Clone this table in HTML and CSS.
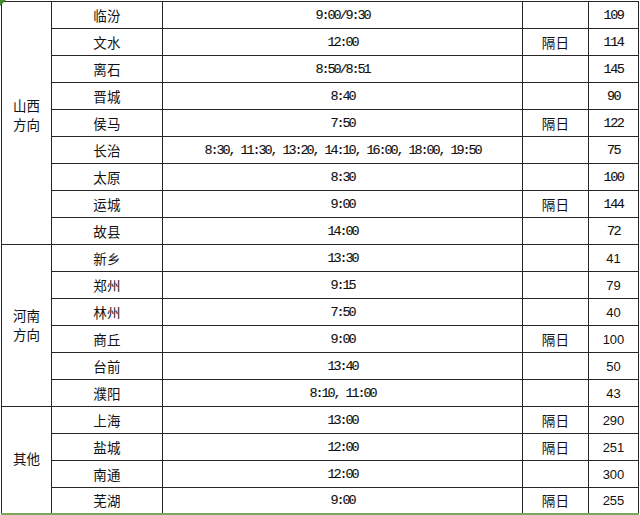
FILE: index.html
```html
<!DOCTYPE html>
<html lang="zh-CN">
<head>
<meta charset="utf-8">
<link rel="stylesheet" href="styles.css">
</head>
<body>
<div class="sheet">
  <div class="grid">
    <div class="c grp g1">山西<br>方向</div>
    <div class="c city">临汾</div><div class="c time">9:00/9:30</div><div class="c note"></div><div class="c num">109</div>
    <div class="c city">文水</div><div class="c time">12:00</div><div class="c note">隔日</div><div class="c num">114</div>
    <div class="c city">离石</div><div class="c time">8:50/8:51</div><div class="c note"></div><div class="c num">145</div>
    <div class="c city">晋城</div><div class="c time">8:40</div><div class="c note"></div><div class="c num">90</div>
    <div class="c city">侯马</div><div class="c time">7:50</div><div class="c note">隔日</div><div class="c num">122</div>
    <div class="c city">长治</div><div class="c time">8:30, 11:30, 13:20, 14:10, 16:00, 18:00, 19:50</div><div class="c note"></div><div class="c num">75</div>
    <div class="c city">太原</div><div class="c time">8:30</div><div class="c note"></div><div class="c num">100</div>
    <div class="c city">运城</div><div class="c time">9:00</div><div class="c note">隔日</div><div class="c num">144</div>
    <div class="c city">故县</div><div class="c time">14:00</div><div class="c note"></div><div class="c num">72</div>

    <div class="c grp g2">河南<br>方向</div>
    <div class="c city">新乡</div><div class="c time">13:30</div><div class="c note"></div><div class="c num sans">41</div>
    <div class="c city">郑州</div><div class="c time">9:15</div><div class="c note"></div><div class="c num sans">79</div>
    <div class="c city">林州</div><div class="c time">7:50</div><div class="c note"></div><div class="c num sans">40</div>
    <div class="c city">商丘</div><div class="c time">9:00</div><div class="c note">隔日</div><div class="c num sans">100</div>
    <div class="c city">台前</div><div class="c time">13:40</div><div class="c note"></div><div class="c num sans">50</div>
    <div class="c city">濮阳</div><div class="c time">8:10, 11:00</div><div class="c note"></div><div class="c num sans">43</div>

    <div class="c grp g3">其他</div>
    <div class="c city">上海</div><div class="c time">13:00</div><div class="c note">隔日</div><div class="c num sans">290</div>
    <div class="c city">盐城</div><div class="c time">12:00</div><div class="c note">隔日</div><div class="c num sans">251</div>
    <div class="c city">南通</div><div class="c time">12:00</div><div class="c note"></div><div class="c num sans">300</div>
    <div class="c city">芜湖</div><div class="c time">9:00</div><div class="c note">隔日</div><div class="c num sans">255</div>
  </div>
  <div class="corner"></div>
</div>
</body>
</html>
```
FILE: styles.css
```css
html, body {
  margin: 0;
  padding: 0;
  background: #ffffff;
}
body {
  width: 640px;
  height: 515px;
  overflow: hidden;
  font-family: "Noto Sans CJK SC", "Noto Sans", sans-serif;
  color: #111111;
}
.sheet {
  position: relative;
  padding: 1px 0 0 1px;
}
.grid {
  display: grid;
  width: 638px;
  box-sizing: border-box;
  padding: 1px 1px 0 1px;
  gap: 1px;
  background: #262626;
  grid-template-columns: 49px 110px 359px 65px 49px;
  grid-template-rows: repeat(15, 26px) 26px 26px 26px 25px;
  border-bottom: 2px solid #78a85a;
}
.c {
  background: #ffffff;
  display: flex;
  align-items: center;
  justify-content: center;
  font-size: 13.5px;
  line-height: 19px;
  white-space: nowrap;
}
.grp {
  grid-column: 1;
  text-align: center;
  box-sizing: border-box;
}
.g1 { grid-row: span 9; padding-bottom: 16px; }
.g2 { grid-row: span 6; padding-bottom: 2px; }
.g3 { grid-row: span 4; padding-bottom: 4px; }
.city { letter-spacing: 0.3px; }
.note { letter-spacing: 0.3px; }
.time {
  font-family: "Liberation Mono", "DejaVu Sans Mono", monospace;
  font-size: 13.5px;
  letter-spacing: -2.1px;
  -webkit-text-stroke: 0.12px #111111;
}
.num {
  font-family: "Liberation Mono", "DejaVu Sans Mono", monospace;
  font-size: 13.5px;
  letter-spacing: -1.5px;
  -webkit-text-stroke: 0.12px #111111;
}
.num.sans {
  font-family: "Liberation Sans", Arial, sans-serif;
  font-size: 13px;
  letter-spacing: 0;
  -webkit-text-stroke: 0;
}
.corner {
  position: absolute;
  left: 0;
  top: 0;
  width: 0;
  height: 0;
  border-top: 6px solid #3f8a2a;
  border-right: 6px solid transparent;
}
```
